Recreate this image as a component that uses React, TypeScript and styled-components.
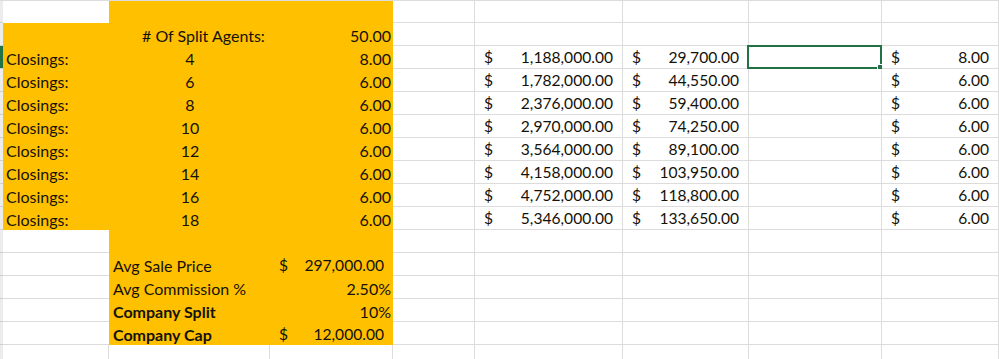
import React from "react";
import styled, { createGlobalStyle, css } from "styled-components";

const GlobalStyle = createGlobalStyle`
  html, body {
    margin: 0;
    padding: 0;
    background: #ffffff;
    overflow: hidden;
  }
`;

const GOLD = "#ffc000";
const GRID = "#dcdcdc";
const INK = "#141209";
const EXCEL_GREEN = "#217346";

type Align = "left" | "center" | "right";

type CellDef = {
  fill?: boolean;
  text?: string;
  align?: Align;
  bold?: boolean;
  indent?: number;
  money?: string;
  selected?: boolean;
};

const Sheet = styled.div`
  display: grid;
  grid-template-columns: 3px 106px 161px 123px 82px 148px 126px 133px 1fr;
  grid-template-rows: 22px repeat(15, 23px);
  border-top: 1px solid ${GRID};
  width: 999px;
  font-family: Lato, "Open Sans", sans-serif;
  font-size: 16px;
  color: ${INK};
`;

const RowHead = styled.div<{ $active?: boolean }>`
  box-sizing: border-box;
  border-bottom: 1px solid #cfcfcf;
  background: ${({ $active }) => ($active ? EXCEL_GREEN : "#ececec")};
`;

const Cell = styled.div<{
  $fill?: boolean;
  $align?: Align;
  $bold?: boolean;
  $indent?: number;
  $right?: boolean;
  $bottom?: boolean;
}>`
  position: relative;
  box-sizing: border-box;
  display: flex;
  align-items: flex-end;
  justify-content: ${({ $align }) =>
    $align === "center" ? "center" : $align === "right" ? "flex-end" : "flex-start"};
  padding: 0 2px 1px ${({ $indent }) => ($indent ?? 3)}px;
  line-height: 19px;
  white-space: nowrap;
  font-weight: ${({ $bold }) => ($bold ? 700 : 400)};
  background: ${({ $fill }) => ($fill ? GOLD : "#ffffff")};
  ${({ $right }) =>
    $right &&
    css`
      border-right: 1px solid ${GRID};
    `}
  ${({ $bottom }) =>
    $bottom &&
    css`
      border-bottom: 1px solid ${GRID};
    `}
`;

const Money = styled.div`
  flex: 1;
  display: flex;
  justify-content: space-between;
  padding: 0 7px 0 6px;
  font-size: 15.6px;
`;

const Selection = styled.div`
  position: absolute;
  top: -1px;
  left: -2px;
  right: -1px;
  bottom: -1px;
  border: 2px solid ${EXCEL_GREEN};
  pointer-events: none;
`;

const Handle = styled.div`
  position: absolute;
  right: -4px;
  bottom: -4px;
  width: 5px;
  height: 5px;
  background: ${EXCEL_GREEN};
  border: 1px solid #ffffff;
`;

const closings = [4, 6, 8, 10, 12, 14, 16, 18];
const volume = [
  "1,188,000.00",
  "1,782,000.00",
  "2,376,000.00",
  "2,970,000.00",
  "3,564,000.00",
  "4,158,000.00",
  "4,752,000.00",
  "5,346,000.00",
];
const gross = [
  "29,700.00",
  "44,550.00",
  "59,400.00",
  "74,250.00",
  "89,100.00",
  "103,950.00",
  "118,800.00",
  "133,650.00",
];

const blank = (): CellDef => ({});
const gold = (): CellDef => ({ fill: true });

const rows: CellDef[][] = [
  [blank(), gold(), gold(), blank(), blank(), blank(), blank(), blank()],
  [
    gold(),
    { fill: true, text: "# Of Split Agents:", indent: 33 },
    { fill: true, text: "50.00", align: "right" },
    blank(),
    blank(),
    blank(),
    blank(),
    blank(),
  ],
  ...closings.map((n, i) => [
    { fill: true, text: "Closings:" },
    { fill: true, text: String(n), align: "center" as Align },
    { fill: true, text: i === 0 ? "8.00" : "6.00", align: "right" as Align },
    blank(),
    { money: volume[i] },
    { money: gross[i] },
    { selected: i === 0 },
    { money: i === 0 ? "8.00" : "6.00" },
  ]),
  [blank(), gold(), gold(), blank(), blank(), blank(), blank(), blank()],
  [
    blank(),
    { fill: true, text: "Avg Sale Price", indent: 4 },
    { fill: true, money: "297,000.00" },
    blank(),
    blank(),
    blank(),
    blank(),
    blank(),
  ],
  [
    blank(),
    { fill: true, text: "Avg Commission %", indent: 4 },
    { fill: true, text: "2.50%", align: "right" },
    blank(),
    blank(),
    blank(),
    blank(),
    blank(),
  ],
  [
    blank(),
    { fill: true, text: "Company Split", indent: 4, bold: true },
    { fill: true, text: "10%", align: "right" },
    blank(),
    blank(),
    blank(),
    blank(),
    blank(),
  ],
  [
    blank(),
    { fill: true, text: "Company Cap", indent: 4, bold: true },
    { fill: true, money: "12,000.00" },
    blank(),
    blank(),
    blank(),
    blank(),
    blank(),
  ],
  [blank(), blank(), blank(), blank(), blank(), blank(), blank(), blank()],
];

export default function App() {
  return (
    <>
      <GlobalStyle />
      <Sheet>
        {rows.map((row, r) => (
          <React.Fragment key={r}>
            <RowHead $active={r === 2} />
            {row.map((cell, c) => {
              const nextFill = row[c + 1]?.fill;
              const belowFill = rows[r + 1]?.[c]?.fill;
              return (
                <Cell
                  key={c}
                  $fill={cell.fill}
                  $align={cell.align}
                  $bold={cell.bold}
                  $indent={cell.indent}
                  $right={!cell.fill && !nextFill}
                  $bottom={!cell.fill && !belowFill}
                >
                  {cell.money ? (
                    <Money>
                      <span>$</span>
                      <span>{cell.money}</span>
                    </Money>
                  ) : (
                    cell.text
                  )}
                  {cell.selected && (
                    <Selection>
                      <Handle />
                    </Selection>
                  )}
                </Cell>
              );
            })}
          </React.Fragment>
        ))}
      </Sheet>
    </>
  );
}
